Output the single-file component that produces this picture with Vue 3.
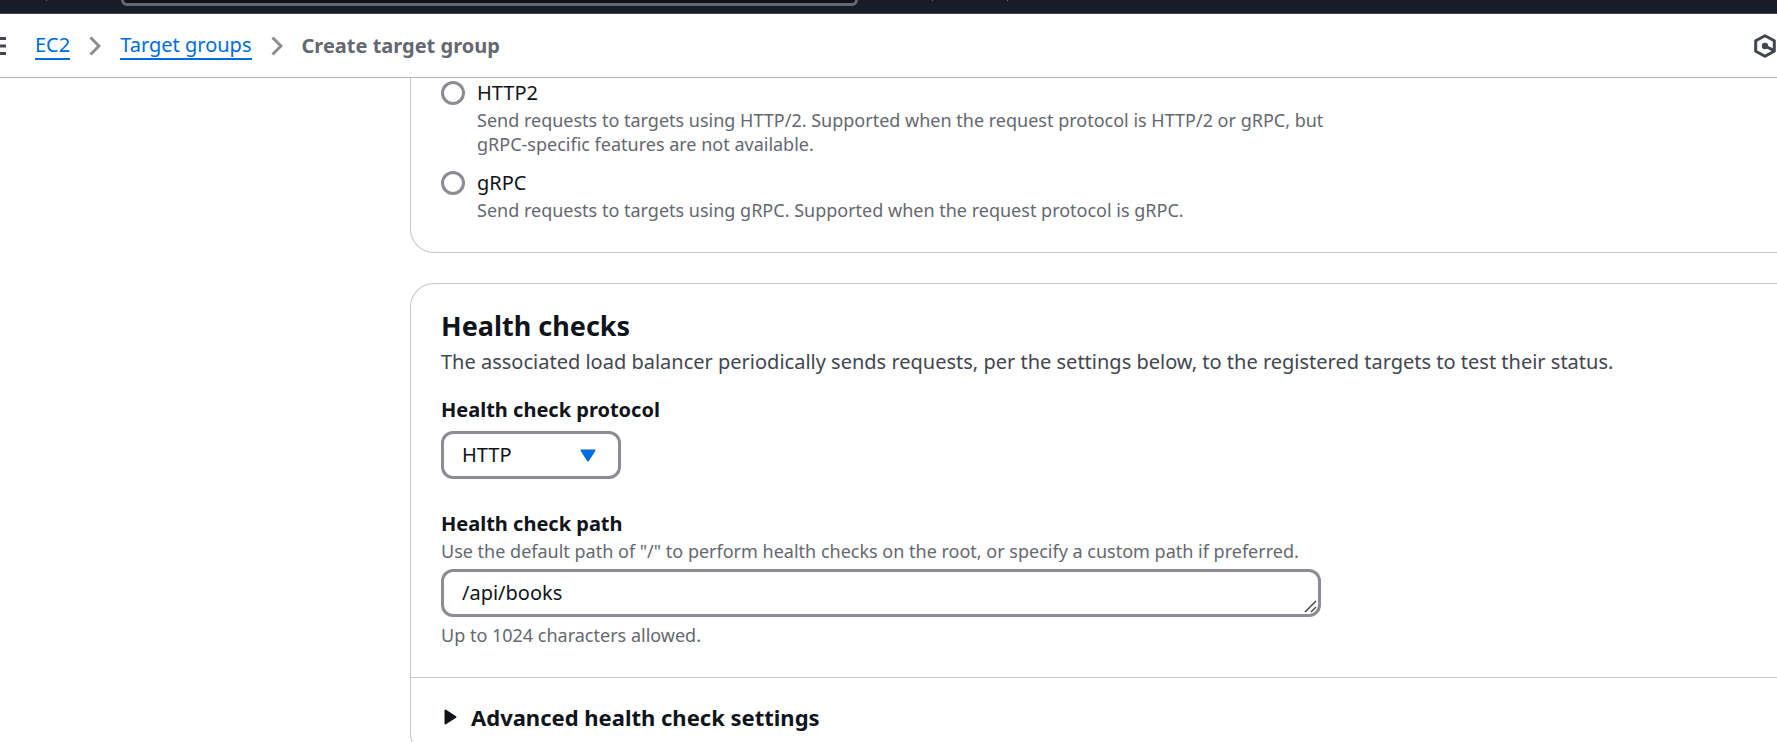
<script setup>
import { ref } from 'vue'

const versions = [
  {
    id: 'http2',
    name: 'HTTP2',
    text: 'Send requests to targets using HTTP/2. Supported when the request protocol is HTTP/2 or gRPC, but gRPC-specific features are not available.'
  },
  {
    id: 'grpc',
    name: 'gRPC',
    text: 'Send requests to targets using gRPC. Supported when the request protocol is gRPC.'
  }
]
const version = ref('http1')
const protocol = ref('HTTP')
const path = ref('/api/books')
</script>

<template>
  <div class="page">
    <header class="topbar">
      <span class="tick"></span>
      <input class="search" type="search" aria-label="Search" />
      <span class="tick"></span>
      <span class="tick"></span>
    </header>

    <div class="toolbar">
      <button class="menu" type="button" aria-label="Open navigation">
        <svg width="6" height="18" viewBox="0 0 6 18">
          <path d="M0 1.5H6M0 9H6M0 16.5H6" stroke="#424650" stroke-width="3" />
        </svg>
      </button>
      <nav class="crumbs" aria-label="Breadcrumbs">
        <a href="#">EC2</a>
        <svg class="chevron" width="12" height="20" viewBox="0 0 12 20">
          <path d="M1.5 1.5L10 10L1.5 18.5" fill="none" stroke="#8c8c94" stroke-width="3" />
        </svg>
        <a href="#">Target groups</a>
        <svg class="chevron" width="12" height="20" viewBox="0 0 12 20">
          <path d="M1.5 1.5L10 10L1.5 18.5" fill="none" stroke="#8c8c94" stroke-width="3" />
        </svg>
        <span class="current">Create target group</span>
      </nav>
      <button class="tool" type="button" aria-label="Open tools">
        <svg width="22" height="24" viewBox="0 0 22 24">
          <path d="M11 1.7L20.3 6.8V17.2L11 22.3L1.7 17.2V6.8Z" fill="none" stroke="#424650" stroke-width="3" stroke-linejoin="round" />
          <circle cx="11" cy="12" r="3.2" fill="#424650" />
          <path d="M11 12L20 16.6" stroke="#424650" stroke-width="3" />
        </svg>
      </button>
    </div>

    <main class="content">
      <section class="card versions">
        <div v-for="v in versions" :key="v.id" class="option">
          <input :id="v.id" v-model="version" type="radio" name="version" :value="v.id" :aria-describedby="v.id + '-text'" />
          <div>
            <label :for="v.id">{{ v.name }}</label>
            <p :id="v.id + '-text'" class="hint">{{ v.text }}</p>
          </div>
        </div>
      </section>

      <section class="card">
        <div class="body">
          <h2>Health checks</h2>
          <p class="lead">The associated load balancer periodically sends requests, per the settings below, to the registered targets to test their status.</p>

          <div class="field">
            <label class="name" for="protocol">Health check protocol</label>
            <div class="select">
              <select id="protocol" v-model="protocol">
                <option>HTTP</option>
                <option>HTTPS</option>
              </select>
              <svg width="16" height="13" viewBox="0 0 16 13">
                <path d="M1.5 1.5H14.5L8 11.5Z" fill="#006ce0" stroke="#006ce0" stroke-width="2" stroke-linejoin="round" />
              </svg>
            </div>
          </div>

          <div class="field">
            <label class="name" for="path">Health check path</label>
            <p id="path-hint" class="hint">Use the default path of "/" to perform health checks on the root, or specify a custom path if preferred.</p>
            <div class="area">
              <textarea id="path" v-model="path" rows="1" spellcheck="false" aria-describedby="path-hint path-limit"></textarea>
              <svg width="13" height="13" viewBox="0 0 13 13">
                <path d="M1 12L12 1M7 12L12 7" stroke="#4a4a4a" stroke-width="1.5" />
              </svg>
            </div>
            <p id="path-limit" class="hint">Up to 1024 characters allowed.</p>
          </div>
        </div>

        <button class="expander" type="button" aria-expanded="false">
          <svg width="13" height="16" viewBox="0 0 13 16">
            <path d="M1.5 1.5V14.5L11.5 8Z" fill="#0f141a" stroke="#0f141a" stroke-width="2" stroke-linejoin="round" />
          </svg>
          Advanced health check settings
        </button>
      </section>
    </main>
  </div>
</template>

<style>
body {
  margin: 0;
  background: #fff;
}
</style>

<style scoped>
.page {
  display: flex;
  flex-direction: column;
  height: 100vh;
  overflow: hidden;
  color: #0f141a;
  font: 20px/30px "Noto Sans", "Open Sans", sans-serif;
}
.page * {
  box-sizing: border-box;
}
p,
h2 {
  margin: 0;
}
button,
select,
textarea {
  color: inherit;
  font: inherit;
}
button {
  padding: 0;
  border: 0;
  background: none;
}
svg {
  display: block;
  flex: none;
}

.topbar {
  display: flex;
  flex: none;
  align-items: flex-start;
  height: 14px;
  padding-left: 46px;
  background: #161d26;
  border-bottom: 1px solid #424650;
}
.tick {
  width: 1px;
  height: 1px;
  background: #656871;
}
.search {
  width: 737px;
  height: 6px;
  margin: 0 74px;
  padding: 0;
  appearance: none;
  background: #0f141a;
  border: 3px solid #656871;
  border-top: 0;
  border-radius: 0 0 10px 10px;
}
.tick + .tick {
  margin-left: 74px;
}

.toolbar {
  display: flex;
  flex: none;
  align-items: center;
  height: 64px;
  border-bottom: 1px solid #b4b4bb;
}
.crumbs {
  display: flex;
  flex: 1;
  align-items: center;
  gap: 19px;
  margin-left: 29px;
}
.crumbs a {
  padding-top: 1px;
  color: #006ce0;
  line-height: 26px;
  text-decoration: none;
  border-bottom: 2px solid #006ce0;
}
.current {
  color: #656871;
  font-weight: 700;
}
.tool {
  margin-right: 1px;
}

.content {
  display: flex;
  flex: 1;
  flex-direction: column;
  gap: 30px;
  min-height: 0;
  padding-left: 410px;
}
.card {
  flex: none;
  border: 1px solid #c6c6cd;
  border-right: 0;
  border-radius: 24px 0 0 24px;
}
.versions {
  display: flex;
  flex-direction: column;
  gap: 12px;
  padding: 0 30px 30px;
  border-top: 0;
  border-top-left-radius: 0;
}
.option {
  display: flex;
  gap: 12px;
  max-width: 900px;
}
.option label {
  display: block;
}
.option input {
  flex: none;
  width: 24px;
  height: 24px;
  margin: 3px 0 0;
  appearance: none;
  border: 3px solid #8c8c94;
  border-radius: 50%;
}
.option input:checked {
  border: 8px solid #006ce0;
}
.hint {
  color: #656871;
  font-size: 18px;
  line-height: 24px;
}

.body {
  padding: 24px 30px 30px;
}
h2 {
  font-size: 27px;
  line-height: 36px;
}
.lead {
  margin-top: 3px;
  color: #424650;
}
.field {
  display: flex;
  flex-direction: column;
  max-width: 880px;
  margin-top: 30px;
}
.lead + .field {
  margin-top: 18px;
}
.name {
  font-weight: 700;
}
.select,
.area {
  display: grid;
  align-items: center;
}
.select {
  width: 180px;
  margin-top: 6px;
}
.area {
  margin: 6px 0;
}
.select > *,
.area > * {
  grid-area: 1 / 1;
}
.select svg,
.area svg {
  justify-self: end;
  margin-right: 25px;
  pointer-events: none;
}
.area svg {
  align-self: end;
  margin: 0 4px 4px 0;
}
select,
textarea {
  display: block;
  width: 100%;
  height: 48px;
  margin: 0;
  padding: 6px 18px;
  appearance: none;
  background: #fff;
  border: 3px solid #8c8c94;
  border-radius: 12px;
}
textarea {
  resize: vertical;
  overflow: hidden;
}
textarea::-webkit-resizer {
  background: none;
}

.expander {
  display: flex;
  align-items: center;
  gap: 14px;
  width: 100%;
  padding: 21px 33px;
  font-size: 22px;
  font-weight: 700;
  line-height: 36px;
  text-align: left;
  border-top: 1px solid #c6c6cd;
}
</style>
